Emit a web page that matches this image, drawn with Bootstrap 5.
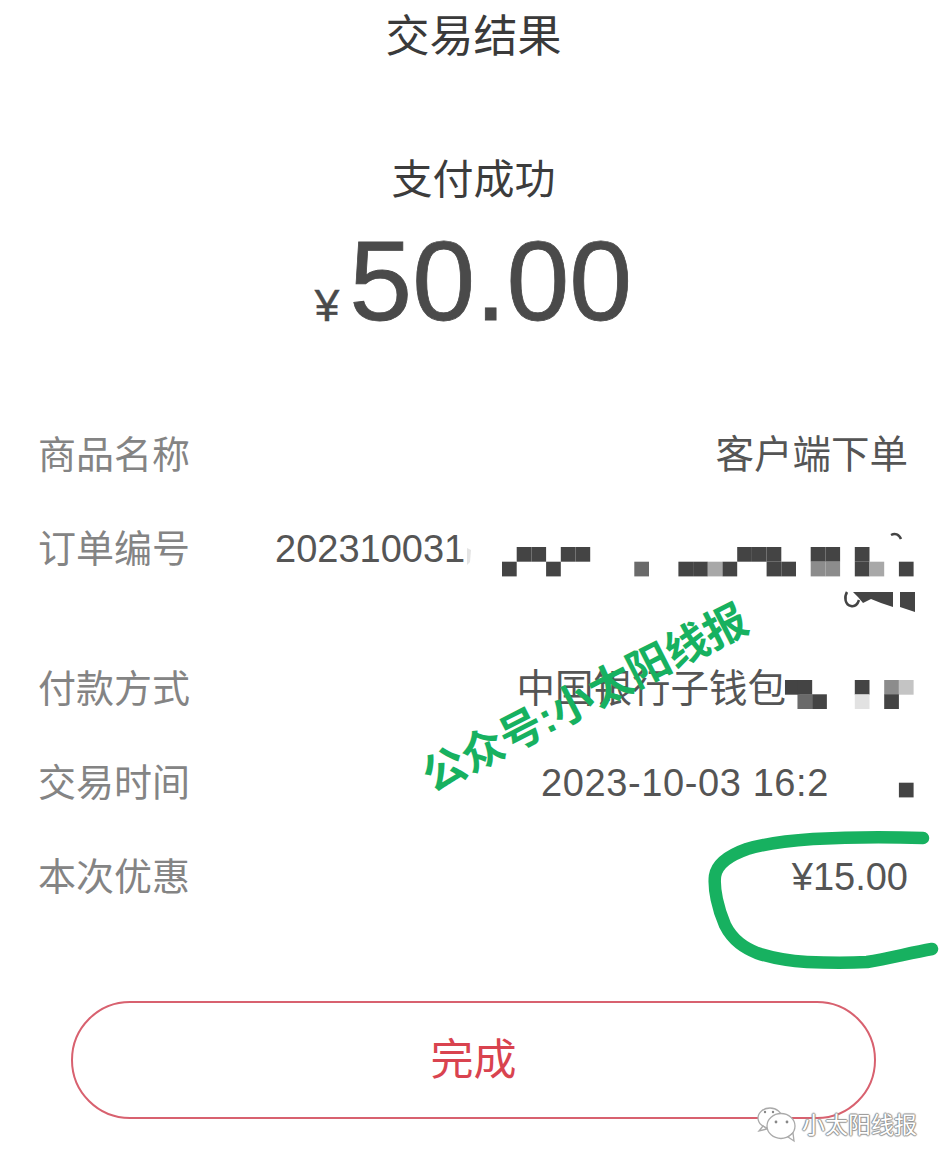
<!DOCTYPE html>
<html lang="zh-CN">
<head>
    <meta charset="UTF-8">
    <meta name="viewport" content="width=device-width, initial-scale=1.0">
    <title>交易结果</title>
    <link rel="stylesheet" href="https://cdn.jsdelivr.net/npm/bootstrap@5.3.0/dist/css/bootstrap.min.css">
    <style>
        body { font-family: "Liberation Sans", "Noto Sans CJK SC", sans-serif; background: #fff; color: #4a4a4a; }
        .pay-page { position: relative; width: 947px; height: 1166px; overflow: hidden; padding-top: 7px; }
        .pay-title { font-size: 44px; line-height: 60px; color: #3a3a3a; }
        .pay-status { font-size: 41px; line-height: 56px; margin-top: 85px; color: #3c3c3c; }
        .pay-amount { height: 120px; margin-top: 10px; color: #4a4a4a; line-height: 1; }
        .pay-amount .yen { font-size: 44px; margin-right: 10px; margin-bottom: 10px; -webkit-text-stroke: .5px #4a4a4a; }
        .pay-amount .num { font-size: 113px; -webkit-text-stroke: .8px #4a4a4a; }
        .pay-rows { margin-top: 94px; padding: 0 39px 0 38px; display: flex; flex-direction: column; gap: 48px; }
        .pay-row { font-size: 38.5px; line-height: 46px; }
        .pay-label { color: #848484; font-size: 38px; }
        .pay-value { color: #555; }
        .digits { font-size: 38px; }
        .order-value { width: 633px; height: 92px; }
        .cut-payment { padding-right: 122px; }
        .cut-time { padding-right: 79px; letter-spacing: .6px; }
        .done-btn { display: block; width: 805px; height: 118px; margin: 101px auto 0; background: #fff; border: 2px solid #d8616f; border-radius: 59px; color: #d9434f; font-size: 43px; }
        .over-art { position: absolute; left: 0; top: 0; width: 947px; height: 1166px; pointer-events: none; }
        .stamp-text { position: absolute; left: 395px; top: 668px; width: 380px; text-align: center; font-size: 43px; line-height: 60px; font-weight: 700; color: #17b160; transform: rotate(-27deg); white-space: nowrap; }
        .brand-text { position: absolute; left: 802px; top: 1108px; font-size: 23px; line-height: 34px; color: #fff; text-shadow: 0 0 1px #777, 1px 0 1px #999, -1px 0 1px #999, 0 1px 1px #999, 0 -1px 1px #999; }
    </style>
</head>
<body>
    <div class="pay-page">
        <div class="pay-title text-center">交易结果</div>
        <div class="pay-status text-center">支付成功</div>
        <div class="pay-amount d-flex justify-content-center align-items-end">
            <span class="yen">¥</span><span class="num">50.00</span>
        </div>

        <div class="pay-rows">
            <div class="pay-row d-flex justify-content-between">
                <span class="pay-label">商品名称</span>
                <span class="pay-value">客户端下单</span>
            </div>
            <div class="pay-row d-flex justify-content-between">
                <span class="pay-label">订单编号</span>
                <span class="pay-value order-value digits">202310031</span>
            </div>
            <div class="pay-row d-flex justify-content-between">
                <span class="pay-label">付款方式</span>
                <span class="pay-value cut-payment">中国银行子钱包</span>
            </div>
            <div class="pay-row d-flex justify-content-between">
                <span class="pay-label">交易时间</span>
                <span class="pay-value cut-time digits">2023-10-03 16:2</span>
            </div>
            <div class="pay-row d-flex justify-content-between">
                <span class="pay-label">本次优惠</span>
                <span class="pay-value digits">¥15.00</span>
            </div>
        </div>

        <button class="done-btn" type="button">完成</button>

        <svg class="over-art" viewBox="0 0 947 1166" xmlns="http://www.w3.org/2000/svg">
            <g id="mosaic"></g>
            <!-- bits of the second order line left over from the mosaic -->
            <path d="M847 592c-3 5-2 13 4 14 5 1 7-3 8-6" fill="none" stroke="#444" stroke-width="2.5"/>
            <path d="M853 592h40v15l-12-4-10-4-8 4-5-6z" fill="#444"/>
            <path d="M900 592h15v20l-15-5z" fill="#444"/>
            <path d="M891 535c4-2 8-1 10 4" fill="none" stroke="#444" stroke-width="2.5"/>
            <path d="M467 548l4 2-1 12-3 3z" fill="#e4e4e4"/>
            <path d="M923 838C890 837 850 837 813 839 785 841 763 844 747 849 730 855 717 863 715 876 713.5 889 718 909 725 925 733 941 745 948 757 953 775 959 790 961 807 962 830 963 850 963 867 962 890 958 910 953 932 949" fill="none" stroke="#17b160" stroke-width="12.5" stroke-linecap="round" stroke-linejoin="round"/>
            <g fill="#fff" stroke="#aaa" stroke-width="1.3">
                <ellipse cx="770" cy="1118" rx="12" ry="10"/>
                <path d="M763 1126l-4 5 8-2z"/>
                <ellipse cx="781" cy="1126" rx="14" ry="12.5"/>
                <path d="M788 1137l6 4-1-8z"/>
            </g>
            <g fill="#888">
                <circle cx="776" cy="1122" r="1.4"/>
                <circle cx="787" cy="1122" r="1.4"/>
                <circle cx="765" cy="1112" r="1.2"/>
                <circle cx="773" cy="1112" r="1.2"/>
            </g>
        </svg>

        <div class="stamp-text">公众号:小太阳线报</div>
        <div class="brand-text">小太阳线报</div>
    </div>

    <script src="https://cdn.jsdelivr.net/npm/bootstrap@5.3.0/dist/js/bootstrap.bundle.min.js"></script>
    <script>
        // mosaic cells: [column, y, colour]
        const dark = "#444", mid = "#6a6a6a", soft = "#a8a8a8", faint = "#e2e2e2";
        const cells = [
            [1,547,dark],[2,547,dark],[4,547,dark],[5,547,dark],
            [0,561.7,dark],[3,561.7,dark],[9,561.7,mid],
            [12,561.7,dark],[13,561.7,dark],[14,561.7,soft],[15,561.7,dark],
            [16,547,dark],[17,547,dark],[18,547,dark],[18,561.7,dark],[19,561.7,dark],
            [21,547,dark],[22,547,dark],[21,561.7,"#8c8c8c"],[22,561.7,"#8c8c8c"],
            [24,547,dark],[24,561.7,dark],[25,561.7,soft],[27,561.7,dark],
            [19.25,680,dark],[20.1,680,dark],[20.1,694.3,mid],[21.1,694.3,dark],
            [24,680,dark],[24,694.3,faint],[26,680,"#8c8c8c"],[27,680,"#c4c4c4"],[26,694.3,dark],
            [27,782.7,dark]
        ];
        const mosaic = document.getElementById("mosaic");
        cells.forEach(c => {
            let r = document.createElementNS("http://www.w3.org/2000/svg", "rect");
            r.setAttribute("x", 502 + 14.7 * c[0]);
            r.setAttribute("y", c[1]);
            r.setAttribute("width", 14.7);
            r.setAttribute("height", 14.7);
            r.setAttribute("fill", c[2]);
            mosaic.appendChild(r);
        });
    </script>
</body>
</html>
